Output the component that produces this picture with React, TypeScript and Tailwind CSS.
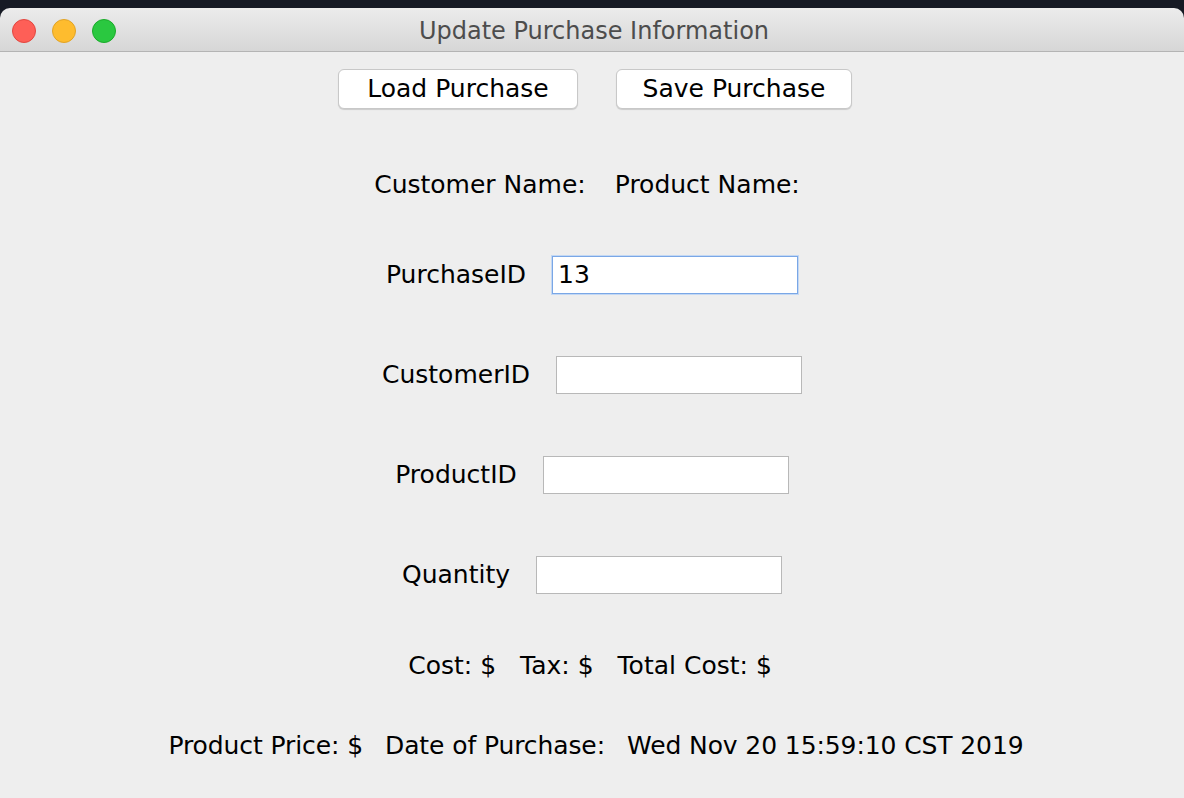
import React from "react";

const font = { fontFamily: '"DejaVu Sans", "Liberation Sans", sans-serif' };

function Field({ value, focused }: { value?: string; focused?: boolean }) {
  return (
    <div
      className={
        focused
          ? "flex h-[38px] w-[246px] items-center border border-[#7aa7e6] bg-white px-[5px] text-[25px] text-black shadow-[0_0_0_1px_#c3d8f4]"
          : "flex h-[38px] w-[246px] items-center border border-[#b8b8b8] bg-white px-[5px] text-[25px] text-black"
      }
    >
      {value}
    </div>
  );
}

function FieldRow({ label, value, focused }: { label: string; value?: string; focused?: boolean }) {
  return (
    <div className="flex h-[100px] items-center justify-center gap-[26px]">
      <span className="text-[25px] text-black">{label}</span>
      <Field value={value} focused={focused} />
    </div>
  );
}

export default function App() {
  return (
    <div className="flex h-[798px] w-[1184px] flex-col overflow-hidden bg-[#161a24]" style={font}>
      <div className="mt-[8px] flex h-[44px] shrink-0 items-center rounded-t-[10px] border-b border-[#b4b4b4] bg-gradient-to-b from-[#ececec] to-[#d6d6d6] px-[12px] pt-[2px]">
        <div className="flex gap-[16px]">
          <span className="h-[24px] w-[24px] rounded-full border border-[#e2463f] bg-[#fe5f57]" />
          <span className="h-[24px] w-[24px] rounded-full border border-[#e1a325] bg-[#febc2e]" />
          <span className="h-[24px] w-[24px] rounded-full border border-[#1aab29] bg-[#2ac840]" />
        </div>
        <div className="flex-1 pr-[100px] text-center text-[24px] text-[#4d4d4d]">Update Purchase Information</div>
      </div>

      <div className="flex flex-1 flex-col bg-[#eeeeee]">
        <div className="mt-[17px] flex justify-center gap-[38px] pl-[6px]">
          <button className="h-[40px] w-[240px] rounded-[6px] border border-[#c8c8c8] bg-white text-[25px] text-black shadow-[0_1px_1px_rgba(0,0,0,0.15)]">
            Load Purchase
          </button>
          <button className="h-[40px] w-[236px] rounded-[6px] border border-[#c8c8c8] bg-white text-[25px] text-black shadow-[0_1px_1px_rgba(0,0,0,0.15)]">
            Save Purchase
          </button>
        </div>

        <div className="mt-[56px] flex h-[40px] items-center justify-center gap-[29px] pr-[10px] text-[25px] text-black">
          <span>Customer Name:</span>
          <span>Product Name:</span>
        </div>

        <div className="mt-[20px] flex flex-col">
          <FieldRow label="PurchaseID" value="13" focused />
          <FieldRow label="CustomerID" />
          <FieldRow label="ProductID" />
          <FieldRow label="Quantity" />
        </div>

        <div className="mt-[21px] flex h-[40px] items-center justify-center gap-[24px] pr-[4px] text-[25px] text-black">
          <span>Cost: $</span>
          <span>Tax: $</span>
          <span>Total Cost: $</span>
        </div>

        <div className="mt-[40px] flex h-[40px] items-center justify-center gap-[22px] pl-[8px] text-[25px] tracking-[-0.1px] text-black">
          <span>Product Price: $</span>
          <span>Date of Purchase:</span>
          <span>Wed Nov 20 15:59:10 CST 2019</span>
        </div>
      </div>
    </div>
  );
}
